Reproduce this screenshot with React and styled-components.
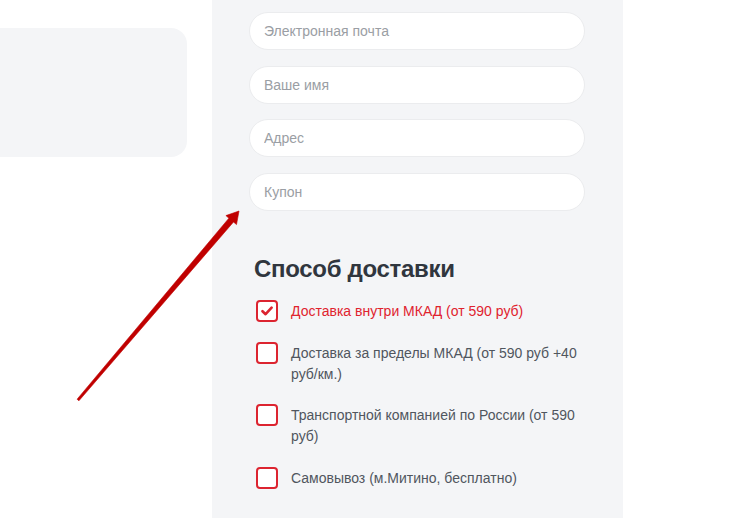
import React, { useState } from 'react';
import styled, { createGlobalStyle } from 'styled-components';

const GlobalStyle = createGlobalStyle`
  html, body {
    margin: 0;
    padding: 0;
    background: #ffffff;
    font-family: 'Liberation Sans', Arial, sans-serif;
  }
  * { box-sizing: border-box; }
`;

const Page = styled.div`
  position: relative;
  display: flex;
  width: 752px;
  height: 518px;
  overflow: hidden;
  background: #ffffff;
`;

const Aside = styled.div`
  width: 212px;
  flex-shrink: 0;
  padding-top: 28px;
`;

const InfoCard = styled.div`
  width: 187px;
  height: 129px;
  background: #f4f5f7;
  border-radius: 0 16px 16px 0;
`;

const Panel = styled.div`
  width: 411px;
  flex-shrink: 0;
  background: #f4f5f7;
  padding: 12px 0 0 37px;
`;

const Fields = styled.div`
  display: flex;
  flex-direction: column;
  gap: 15.7px;
  width: 336px;
`;

const Field = styled.input`
  height: 38px;
  width: 100%;
  border: 1px solid #ebecee;
  border-radius: 19px;
  background: #ffffff;
  padding: 0 14px;
  font-family: 'Liberation Sans', Arial, sans-serif;
  font-size: 14px;
  color: #333;
  outline: none;
  &::placeholder {
    color: #9a9ea4;
  }
`;

const Title = styled.h2`
  margin: 44px 0 0 5px;
  font-family: 'Liberation Sans', Arial, sans-serif;
  font-size: 24px;
  line-height: 28px;
  font-weight: 700;
  color: #30363e;
  letter-spacing: -0.3px;
`;

const Options = styled.div`
  display: flex;
  flex-direction: column;
  gap: 19.5px;
  margin: 17px 0 0 7px;
  width: 336px;
`;

const Option = styled.label`
  display: flex;
  align-items: flex-start;
  gap: 13px;
  cursor: pointer;
`;

const Box = styled.span`
  flex-shrink: 0;
  display: flex;
  align-items: center;
  justify-content: center;
  width: 22px;
  height: 22px;
  border: 2px solid #dc2430;
  border-radius: 4px;
  background: #ffffff;
`;

const OptionText = styled.span`
  font-size: 14px;
  line-height: 21px;
  padding-top: 1px;
  color: ${(props) => (props.active ? '#e0232e' : '#50565e')};
`;

const ArrowLayer = styled.svg`
  position: absolute;
  left: 0;
  top: 0;
  pointer-events: none;
`;

const options = [
  'Доставка внутри МКАД (от 590 руб)',
  'Доставка за пределы МКАД (от 590 руб +40 руб/км.)',
  'Транспортной компанией по России (от 590 руб)',
  'Самовывоз (м.Митино, бесплатно)',
];

const placeholders = ['Электронная почта', 'Ваше имя', 'Адрес', 'Купон'];

export default function App() {
  const [selected, setSelected] = useState(0);

  return (
    <>
      <GlobalStyle />
      <Page>
        <Aside>
          <InfoCard />
        </Aside>
        <Panel>
          <Fields>
            {placeholders.map((p) => (
              <Field key={p} placeholder={p} />
            ))}
          </Fields>
          <Title>Способ доставки</Title>
          <Options>
            {options.map((text, i) => (
              <Option key={text} onClick={() => setSelected(i)}>
                <Box>
                  {selected === i && (
                    <svg width="12" height="10" viewBox="0 0 12 10">
                      <path d="M1.5 5.2 L4.6 8.2 L10.6 1.6" fill="none" stroke="#dc2430" strokeWidth="2.6" strokeLinecap="round" strokeLinejoin="round" />
                    </svg>
                  )}
                </Box>
                <OptionText active={selected === i}>{text}</OptionText>
              </Option>
            ))}
          </Options>
        </Panel>
      </Page>
      <ArrowLayer width="752" height="518" viewBox="0 0 752 518">
        <polygon
          points="77.1,399.2 228.9,218.2 225.9,215.6 239,211 236.5,224.6 233.5,222 78.9,400.8"
          fill="#c00000"
          stroke="#c00000"
          strokeWidth="0.6"
          strokeLinejoin="round"
        />
      </ArrowLayer>
    </>
  );
}
